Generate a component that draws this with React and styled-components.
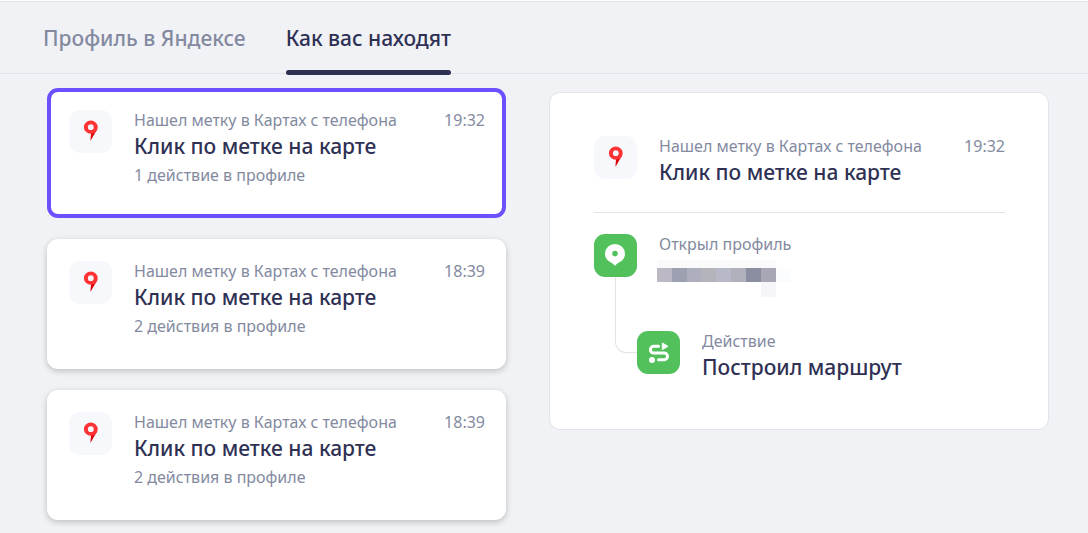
import React, { useState } from 'react'
import styled, { createGlobalStyle } from 'styled-components'

const GlobalStyle = createGlobalStyle`
  * {
    box-sizing: border-box;
  }

  body {
    margin: 0;
    background: #f1f2f6;
    color: #2f3154;
    font-family: 'Noto Sans', 'Open Sans', sans-serif;
  }

  button {
    font-family: inherit;
    color: inherit;
    border: none;
    background: none;
    padding: 0;
    margin: 0;
    cursor: pointer;
  }
`

const Page = styled.div`
  border-top: 1px solid white;
`

const Tabs = styled.nav`
  display: flex;
  gap: 40px;
  padding: 0 43px;
  height: 73px;
  border-top: 1px solid #e2e3ea;
  border-bottom: 1px solid #e2e3ea;
`

const Tab = styled.button`
  position: relative;
  height: 73px;
  padding-bottom: 1px;
  font-size: 21px;
  line-height: 28px;
  font-weight: 500;
  white-space: nowrap;
  color: ${props => props.$active ? '#2f3154' : '#838aa0'};

  &::after {
    content: '';
    display: ${props => props.$active ? 'block' : 'none'};
    position: absolute;
    left: 0;
    right: 0;
    bottom: 0;
    height: 5px;
    border-radius: 3px;
    background: #2f3154;
  }
`

const Columns = styled.main`
  display: grid;
  grid-template-columns: 459fr 500fr;
  align-items: start;
  gap: 43px;
  padding: 14px 39px 13px 47px;
`

const Visits = styled.div`
  display: flex;
  flex-direction: column;
  gap: 21px;
`

const Card = styled.button`
  display: flex;
  align-items: flex-start;
  gap: 22px;
  width: 100%;
  min-height: 130px;
  padding: 18px 17px 18px 18px;
  text-align: left;
  border-radius: 11px;
  background: white;
  border: 4px solid ${props => props.$selected ? '#6b50ff' : 'white'};
  box-shadow: ${props => props.$selected ? 'none' : '0 2px 6px #00000038'};
`

const Panel = styled.section`
  margin-top: 4px;
  padding: 43px 43px 43px 44px;
  border: 1px solid #e2e3ea;
  border-radius: 11px;
  background: white;
`

const Tile = styled.span`
  display: flex;
  flex: none;
  width: 43px;
  height: 43px;
  border-radius: 11px;
  background: ${props => props.$green ? '#52c15c' : '#f7f8fc'};

  svg {
    display: block;
    width: 43px;
    height: 43px;
  }
`

const Info = styled.span`
  display: flex;
  flex: 1;
  min-width: 0;
  flex-direction: column;
`

const Line = styled.span`
  display: flex;
  justify-content: space-between;
  gap: 16px;
`

const Caption = styled.span`
  font-size: 16px;
  line-height: 20px;
  color: #838aa0;
`

const Title = styled.span`
  margin-bottom: 3px;
  font-size: 21px;
  line-height: 32px;
  font-weight: 500;
`

const VisitHead = styled.div`
  display: flex;
  gap: 22px;
  height: 77px;
  border-bottom: 1px solid #e2e3ea;
`

const Step = styled.div`
  display: flex;
  gap: 22px;
  padding-top: 21px;
`

const Nested = styled.div`
  display: flex;
  margin-left: 21px;

  ${Step} {
    padding-top: 54px;
  }
`

const Connector = styled.div`
  width: 22px;
  height: 76px;
  border: solid #e2e3ea;
  border-width: 0 0 1px 1px;
  border-bottom-left-radius: 11px;
`

const Mosaic = styled.span`
  display: block;
  margin: 6px 0 0 -2px;

  svg {
    display: block;
  }
`

const StepBody = styled(Info)`
  height: 43px;
`

const mosaic = ['#bdb9c4', '#9da0b0', '#adafbf', '#b4b4bc', '#b7b9c8', '#b1b1be', '#8b8da1', '#a7a7b5']

const visits = [
  { id: 1, time: '19:32', actions: '1 действие в профиле' },
  { id: 2, time: '18:39', actions: '2 действия в профиле' },
  { id: 3, time: '18:39', actions: '2 действия в профиле' }
]

const PinIcon = () => (
  <Tile>
    <svg viewBox="0 0 43 43" aria-hidden="true">
      <path d="M28 19.500 21.400 31 22 23.200Z" fill="#d90007" />
      <path
        fillRule="evenodd"
        fill="#ff3333"
        d="M21.800 10.600a6.900 6.600 0 1 0 0 13.200c2.400 0 4.600-1.100 5.700-2.800.8-1.100 1.200-2.400 1.200-3.800a6.900 6.600 0 0 0-6.900-6.600Zm0 3.700a2.900 2.900 0 1 1 0 5.800 2.900 2.900 0 0 1 0-5.800Z"
      />
    </svg>
  </Tile>
)

const ProfileIcon = () => (
  <Tile $green>
    <svg viewBox="0 0 43 43" aria-hidden="true">
      <path
        fillRule="evenodd"
        fill="white"
        d="M21 10a10 9.800 0 0 0-10 9.800c0 3.200 1.600 5.800 4 7.500 2 1.400 4.600 2.300 6 4.700 1.400-2.400 4-3.300 6-4.700 2.400-1.700 4-4.300 4-7.500A10 9.800 0 0 0 21 10Zm0 6.800a2.800 2.800 0 1 1 0 5.600 2.800 2.800 0 0 1 0-5.600Z"
      />
    </svg>
  </Tile>
)

const RouteIcon = () => (
  <Tile $green>
    <svg viewBox="0 0 43 43" aria-hidden="true">
      <path
        d="M21.500 15.300H16.800a3.400 3.400 0 0 0 0 6.800H27.200a3.300 3.300 0 0 1 0 6.600H21.500"
        fill="none"
        stroke="white"
        strokeWidth="3"
        strokeLinecap="round"
      />
      <path d="M25.300 12v6.600l5.700-3.300Z" fill="white" stroke="white" strokeWidth="1" strokeLinejoin="round" />
      <circle cx="15" cy="29" r="3" fill="white" />
    </svg>
  </Tile>
)

const HiddenName = () => (
  <Mosaic>
    <svg width="134" height="38" role="img" aria-label="Скрыто">
      <rect width="119" height="9" fill="#fafafb" />
      <rect x="119" y="8" width="15" height="14" fill="#fbfcfe" />
      <rect x="104" y="22" width="15" height="15" fill="#f6f6f8" />
      {mosaic.map((color, i) => (
        <rect key={color} x={i < 3 ? i * 15 : i * 15 - 1} y="8" width="15" height="14" fill={color} />
      ))}
    </svg>
  </Mosaic>
)

const VisitInfo = ({ visit, short }) => (
  <Info>
    <Line>
      <Caption>Нашел метку в Картах с телефона</Caption>
      <Caption>{visit.time}</Caption>
    </Line>
    <Title>Клик по метке на карте</Title>
    {!short && <Caption>{visit.actions}</Caption>}
  </Info>
)

const App = () => {
  const [tab, setTab] = useState('find')
  const [selectedId, setSelectedId] = useState(1)
  const selected = visits.find(v => v.id === selectedId)

  return (
    <Page>
      <GlobalStyle />
      <Tabs>
        <Tab $active={tab === 'profile'} onClick={() => setTab('profile')}>Профиль в Яндексе</Tab>
        <Tab $active={tab === 'find'} onClick={() => setTab('find')}>Как вас находят</Tab>
      </Tabs>
      <Columns>
        <Visits>
          {visits.map(visit => (
            <Card
              key={visit.id}
              $selected={visit.id === selectedId}
              onClick={() => setSelectedId(visit.id)}
            >
              <PinIcon />
              <VisitInfo visit={visit} />
            </Card>
          ))}
        </Visits>
        <Panel>
          <VisitHead>
            <PinIcon />
            <VisitInfo visit={selected} short />
          </VisitHead>
          <Step>
            <ProfileIcon />
            <StepBody>
              <Caption>Открыл профиль</Caption>
              <HiddenName />
            </StepBody>
          </Step>
          <Nested>
            <Connector />
            <Step>
              <RouteIcon />
              <Info>
                <Caption>Действие</Caption>
                <Title>Построил маршрут</Title>
              </Info>
            </Step>
          </Nested>
        </Panel>
      </Columns>
    </Page>
  )
}

export default App
